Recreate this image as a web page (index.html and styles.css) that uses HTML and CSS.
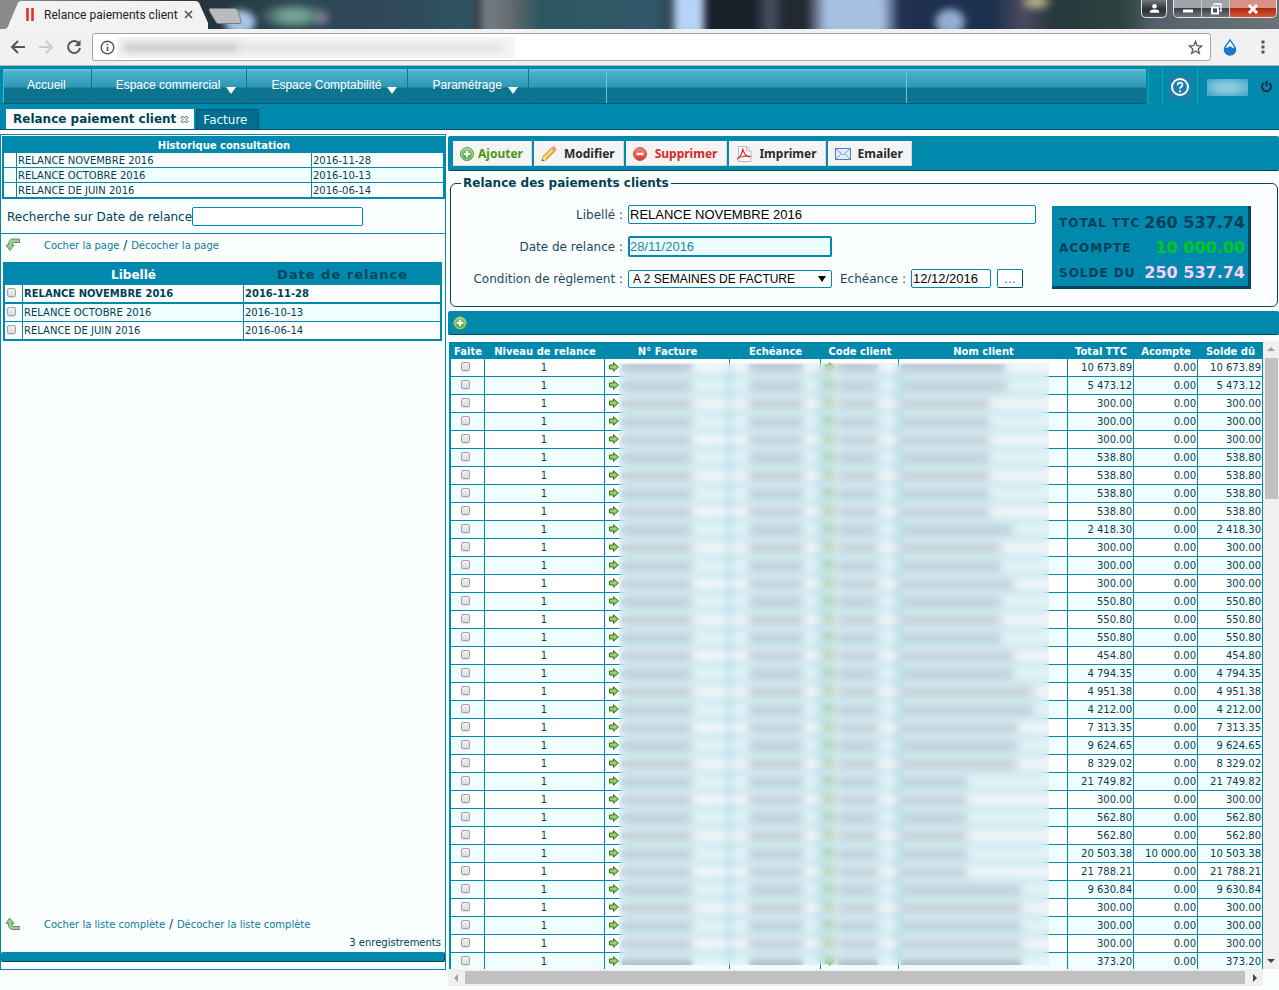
FILE: index.html
```html
<!DOCTYPE html>
<html lang="fr">
<head>
<meta charset="utf-8">
<title>Relance paiements client</title>
<link rel="stylesheet" href="styles.css">
</head>
<body>
<svg class="defs" width="0" height="0" aria-hidden="true">
  <defs>
    <linearGradient id="gGreen" x1="0" y1="0" x2="0" y2="1"><stop offset="0" stop-color="#8fd07f"/><stop offset="1" stop-color="#3f9a35"/></linearGradient>
    <linearGradient id="gRed" x1="0" y1="0" x2="0" y2="1"><stop offset="0" stop-color="#f08a80"/><stop offset="1" stop-color="#d8382c"/></linearGradient>
    <symbol id="plus" viewBox="0 0 14 14"><circle cx="7" cy="7" r="6.5" fill="url(#gGreen)" stroke="#5a9a50"/><circle cx="7" cy="7" r="5.4" fill="none" stroke="#c4e8bc" stroke-width=".8"/><path d="M7 3.8v6.4M3.8 7h6.4" stroke="#fff" stroke-width="2.2"/></symbol>
    <symbol id="arrow" viewBox="0 0 10 10"><path d="M.5 3h4V.7L9.400 5 4.500 9.300V7h-4z" fill="#86c25f" stroke="#3c7a16"/><path d="M2 5h5" stroke="#b4dc98" stroke-width="1"/></symbol>
  </defs>
</svg>

<header class="browser">
  <div class="titlebar">
    <div class="photo"></div>
    <div class="btab">
      <svg class="btab-shape" viewBox="0 0 208 29" preserveAspectRatio="none"><path d="M0 29h4c3 0 4-2 5-5l8-19c1-3 2-4 5-4h173c3 0 4 1 5 4l9 20c1 3 2 4 5 4z" fill="#f2f2f2"/></svg>
      <svg class="favicon" viewBox="0 0 8 16"><path d="M1.500 1v13M6.500 1v13" stroke="#e8302a" stroke-width="2.600"/></svg>
      <span class="btab-title">Relance paiements client</span>
      <svg class="btab-x" viewBox="0 0 9 9"><path d="M1 1l7 7M8 1l-7 7" stroke="#5a5a5a" stroke-width="1.700"/></svg>
    </div>
    <svg class="newtab" viewBox="0 0 34 16"><path d="M3 .5h23c2 0 3 1 4 3l3 9c1 2 0 3-2 3H11c-2 0-3-1-4-3L1.500 3C.8 1.500 1 .5 3 .5z" fill="#b8bcbf" stroke="#77808a"/></svg>
    <div class="winbtns">
      <button class="win user" aria-label="Profil"><svg viewBox="0 0 12 12" width="11" height="11"><circle cx="6" cy="3.500" r="2.500" fill="#fff"/><path d="M1 10.500V8.500C3 6.500 9 6.500 11 8.500v2z" fill="#fff"/></svg></button>
      <div class="wingroup">
        <button class="win" aria-label="Réduire"><svg viewBox="0 0 12 12" width="12" height="12"><path d="M1 6.500h10v3H1z" fill="#fff"/></svg></button>
        <button class="win" aria-label="Agrandir"><svg viewBox="0 0 12 12" width="12" height="12"><path d="M4 2.500V1h7v7H9.500" fill="none" stroke="#fff" stroke-width="1.300"/><path d="M2 4.500h6v6H2z" fill="none" stroke="#fff" stroke-width="2"/></svg></button>
        <button class="win close" aria-label="Fermer"><svg viewBox="0 0 12 12" width="12" height="12"><path d="M2 2l8 8M10 2l-8 8" stroke="#fff" stroke-width="3"/></svg></button>
      </div>
    </div>
  </div>
  <div class="navbar">
    <svg width="16" height="16" viewBox="0 0 16 16"><path d="M15 8H2M8 2L2 8l6 6" fill="none" stroke="#555" stroke-width="2"/></svg>
    <svg width="16" height="16" viewBox="0 0 16 16"><path d="M1 8h13M8 2l6 6-6 6" fill="none" stroke="#ccc" stroke-width="2"/></svg>
    <svg width="16" height="16" viewBox="0 0 16 16"><path d="M13 4.500A6 6 0 1 0 14 9" fill="none" stroke="#555" stroke-width="2"/><path d="M14.500 1v6h-6z" fill="#555"/></svg>
    <div class="address">
      <svg width="15" height="15" viewBox="0 0 15 15"><circle cx="7.500" cy="7.500" r="6.300" fill="none" stroke="#555" stroke-width="1.400"/><path d="M7.500 6.500V11M7.500 3.700v1.600" stroke="#555" stroke-width="1.600"/></svg>
      <span class="urlblur"><i></i><b></b></span>
      <svg class="star" width="15" height="15" viewBox="0 0 15 15"><path d="M7.500 1.500l1.700 4.200 4.500.3-3.500 2.900 1.100 4.400-3.800-2.400-3.800 2.400 1.100-4.400L1.300 6l4.500-.3z" fill="none" stroke="#555" stroke-width="1.300"/></svg>
    </div>
    <svg class="drop" width="14" height="17" viewBox="0 0 14 17"><path d="M7 1C5 4.500 1.500 7 1.500 10.500a5.500 5.500 0 0 0 11 0C12.500 7 9 4.500 7 1z" fill="#fff" stroke="#1877c9" stroke-width="1.500"/><path d="M1.500 9.500Q3 8 4.300 9 7 5.500 9.600 9 11 8 12.500 9.500v1a5.500 5.500 0 0 1-11 0z" fill="#1877c9"/></svg>
    <svg class="dots" width="4" height="14" viewBox="0 0 4 14"><path d="M.5.500h3v3h-3zM.5 5.500h3v3h-3zM.5 10.500h3v3h-3z" fill="#555"/></svg>
  </div>
</header>

<div class="appbar">
  <nav class="menurow">
    <div class="menu">
      <a class="item home" href="#">Accueil</a>
      <a class="item" href="#">Espace commercial<i class="caret"></i></a>
      <a class="item" href="#">Espace Comptabilité<i class="caret"></i></a>
      <a class="item" href="#">Paramétrage<i class="caret"></i></a>
      <span class="seg short"></span><span class="seg long"></span><span class="seg"></span>
    </div>
    <div class="tools">
      <span class="cell thin"></span>
      <button class="cell help" aria-label="Aide"><svg width="24" height="24" viewBox="0 0 24 24"><rect width="24" height="24" fill="#1a80aa"/><circle cx="12" cy="12" r="8" fill="none" stroke="#fff" stroke-width="2"/><path d="M9.500 10.200c0-3.400 5-3.400 5-.4 0 2-2.500 1.900-2.500 4M12 15.300v1.900" fill="none" stroke="#fff" stroke-width="1.700"/></svg></button>
      <span class="userblur"></span>
      <button class="power" aria-label="Déconnexion"><svg width="13" height="13" viewBox="0 0 13 13"><path d="M4 3a4.500 4.500 0 1 0 5 0M6.500 1v5.500" fill="none" stroke="#0b2f3c" stroke-width="1.900"/></svg></button>
    </div>
  </nav>
  <div class="tabs">
    <a class="tab active" href="#">Relance paiement client <svg width="9" height="9" viewBox="0 0 9 9"><path d="M2.500 1l2 2 2-2L8 2.500l-2 2 2 2L6.500 8l-2-2-2 2L1 6.500l2-2-2-2z" fill="#fff" stroke="#444" stroke-width=".9"/></svg></a>
    <a class="tab" href="#">Facture</a>
  </div>
</div>

<main class="content">
  <aside class="left">
    <table class="hist">
      <colgroup><col class="h1"><col><col class="h3"></colgroup>
      <thead><tr><th colspan="3">Historique consultation</th></tr></thead>
      <tbody>
        <tr><td></td><td>RELANCE NOVEMBRE 2016</td><td>2016-11-28</td></tr>
        <tr><td></td><td>RELANCE OCTOBRE 2016</td><td>2016-10-13</td></tr>
        <tr><td></td><td>RELANCE DE JUIN 2016</td><td>2016-06-14</td></tr>
      </tbody>
    </table>
    <div class="search"><label for="q">Recherche sur Date de relance</label><input id="q" type="text"></div>
    <div class="links">
      <svg width="16" height="14" viewBox="0 0 16 14"><path d="M14.500 1H8C5 1 3.500 3 3.500 7H1l4 5.500L9 7H7c0-2 .5-2.500 2-2.500h5.500z" fill="#9bcf8f" stroke="#4f8f48" stroke-width=".9"/></svg>
      <span><a href="#">Cocher la page</a> / <a href="#">Décocher la page</a></span>
    </div>
    <table class="list">
      <colgroup><col class="l1"><col><col class="l3"></colgroup>
      <thead><tr><th></th><th>Libellé</th><th class="sorted">Date de relance</th></tr></thead>
      <tbody>
        <tr class="current"><td><input type="checkbox" aria-label="RELANCE NOVEMBRE 2016"></td><td>RELANCE NOVEMBRE 2016</td><td>2016-11-28</td></tr>
        <tr><td><input type="checkbox" aria-label="RELANCE OCTOBRE 2016"></td><td>RELANCE OCTOBRE 2016</td><td>2016-10-13</td></tr>
        <tr><td><input type="checkbox" aria-label="RELANCE DE JUIN 2016"></td><td>RELANCE DE JUIN 2016</td><td>2016-06-14</td></tr>
      </tbody>
    </table>
    <div class="links bottom">
      <svg width="16" height="14" viewBox="0 0 16 14"><path d="M14.500 12.500H8C5 12.500 3.500 10.500 3.500 6.500H1L4.500 1 9 6.500H7c0 2.500.5 3 2 3h5.500z" fill="#9bcf8f" stroke="#4f8f48" stroke-width=".9"/></svg>
      <span><a href="#">Cocher la liste complète</a> / <a href="#">Décocher la liste complète</a></span>
    </div>
    <p class="count">3 enregistrements</p>
    <div class="footbar"></div>
  </aside>

  <section class="right">
    <div class="toolbar">
      <button class="act add"><svg width="14" height="14"><use href="#plus"/></svg>Ajouter</button>
      <button class="act edit"><svg width="16" height="16" viewBox="0 0 16 16"><path d="M1 15l1-4.500L11 1.500q1.500-1.300 3 0 1.500 1.500.3 3L5.500 13.500z" fill="#f6bf4c" stroke="#b57a1c" stroke-width=".9"/><path d="M3.500 11.500l8.500-8.500" stroke="#fde6a4" stroke-width="1.500"/><path d="M1 15l1-4.200 3.200 2.900z" fill="#f8dfb6"/><path d="M1 15l.5-2 1.500 1.400z" fill="#333"/><path d="M11 1.500q1.500-1.300 3 0 1.500 1.500.3 3l-1 1-3.300-3z" fill="#eaa27c"/></svg>Modifier</button>
      <button class="act del"><svg width="14" height="14" viewBox="0 0 14 14"><circle cx="7" cy="7" r="6.500" fill="url(#gRed)" stroke="#c8584e"/><path d="M3.500 7h7" stroke="#fff" stroke-width="2.400"/></svg>Supprimer</button>
      <button class="act print"><svg width="16" height="16" viewBox="0 0 16 16"><path d="M2.500.5h8l4.500 4.500v10.500H2.500z" fill="#fbfbfb" stroke="#b9b9b9"/><path d="M10.500.5V5H15" fill="none" stroke="#b9b9b9"/><path d="M1 13C4 12 7 6 6.500 2.500 8 8 11 11 14 10.500 11 9 4 10.500 1 13z" fill="none" stroke="#d42a22" stroke-width="1.100"/></svg>Imprimer</button>
      <button class="act mail"><svg width="16" height="12" viewBox="0 0 16 12"><rect x=".5" y=".5" width="15" height="11" fill="#e6f0fc" stroke="#4f7fc0"/><path d="M1 1l7 6 7-6M1 11l5-5M15 11l-5-5" fill="none" stroke="#6f9bd4"/></svg>Emailer</button>
    </div>
    <fieldset class="form">
      <legend>Relance des paiements clients</legend>
      <div class="fields">
        <label for="lib">Libellé :</label>
        <input id="lib" class="wide" type="text" value="RELANCE NOVEMBRE 2016">
        <label for="dt">Date de relance :</label>
        <input id="dt" class="date" type="text" value="28/11/2016" readonly>
        <label for="cond">Condition de règlement :</label>
        <div class="line">
          <span class="selwrap"><select id="cond"><option>A 2 SEMAINES DE FACTURE</option></select></span>
          <label for="ech">Echéance :</label>
          <input id="ech" type="text" value="12/12/2016">
          <button class="more">...</button>
        </div>
      </div>
      <dl class="totals">
        <dt>TOTAL TTC</dt><dd>260 537.74</dd>
        <dt>ACOMPTE</dt><dd class="green">10 000.00</dd>
        <dt>SOLDE DU</dt><dd class="pink">250 537.74</dd>
      </dl>
    </fieldset>
    <div class="addbar"><button aria-label="Ajouter une ligne"><svg width="14" height="14"><use href="#plus"/></svg></button></div>
    <div class="gridwrap">
      <div class="viewport">
        <table class="grid">
          <colgroup><col class="c1"><col class="c2"><col class="c3"><col class="c4"><col class="c5"><col><col class="c7"><col class="c8"><col class="c9"></colgroup>
          <thead><tr><th>Faite</th><th>Niveau de relance</th><th>N° Facture</th><th>Echéance</th><th>Code client</th><th>Nom client</th><th>Total TTC</th><th>Acompte</th><th>Solde dû</th></tr></thead>
          <tbody id="rows"></tbody>
        </table>
        <div class="veil"></div>
      </div>
      <div class="vbar"><i class="up"></i><span></span><i class="down"></i></div>
      <div class="hbar"><i class="prev"></i><span></span><i class="next"></i></div>
    </div>
  </section>
</main>
<script src="rows.js"></script>
</body>
</html>
```
FILE: rows.js
```js
// total | width of the masked client name; the balance equals the total unless a deposit is given
const data = [
  ["10 673.89", 104], ["5 473.12", 106], ["300.00", 88], ["300.00", 88], ["300.00", 88],
  ["538.80", 88], ["538.80", 88], ["538.80", 88], ["538.80", 88], ["2 418.30", 112],
  ["300.00", 100], ["300.00", 100], ["300.00", 112], ["550.80", 100], ["550.80", 100],
  ["550.80", 100], ["454.80", 112], ["4 794.35", 112], ["4 951.38", 132], ["4 212.00", 132],
  ["7 313.35", 116], ["9 624.65", 116], ["8 329.02", 116], ["21 749.82", 66], ["300.00", 66],
  ["562.80", 66], ["562.80", 66], ["20 503.38", 66, "10 000.00", "10 503.38"], ["21 788.21", 66],
  ["9 630.84", 120], ["300.00", 120], ["300.00", 120], ["300.00", 120], ["373.20", 120]
];
const arrow = '<svg class="go" width="10" height="10"><use href="#arrow"/></svg>';
document.getElementById("rows").innerHTML = data.map(([ttc, w, dep = "0.00", due = ttc], i) => `
<tr><td class="c check"><input type="checkbox" aria-label="Faite, ligne ${i + 1}"></td><td class="c">1</td>
<td><div class="masked">${arrow}<i class="m m-num"></i></div></td>
<td><div class="masked mid"><i class="m m-date"></i></div></td>
<td><div class="masked">${arrow}<i class="m m-code"></i></div></td>
<td><div class="masked"><i class="m" style="width:${w}px"></i></div></td>
<td>${ttc}</td><td>${dep}</td><td>${due}</td></tr>`).join("");
```
FILE: styles.css
```css
* { box-sizing: border-box; }
body {
  margin: 0;
  height: 100vh;
  display: flex;
  flex-direction: column;
  background: #fbffff;
  color: #003f55;
  font-family: "DejaVu Sans", sans-serif;
  font-size: 12px;
  overflow: hidden;
}
button, input, select { font: 13px "Liberation Sans", sans-serif; margin: 0; }
button { padding: 0; border: 0; background: none; }
svg { display: block; flex: none; }
.defs { position: absolute; }
a { text-decoration: none; color: inherit; }

/* browser frame */
.titlebar {
  position: relative;
  display: flex;
  align-items: flex-start;
  height: 29px;
  overflow: hidden;
  background: #2d4450;
}
.photo {
  position: absolute;
  inset: -6px;
  filter: blur(3px);
  background:
    radial-gradient(ellipse 18px 14px at 246px 28px, #a9c4e6 70%, transparent),
    radial-gradient(ellipse 36px 14px at 300px 22px, #76a596 30%, transparent),
    radial-gradient(ellipse 10px 10px at 328px 24px, #7c6a8c 30%, transparent),
    radial-gradient(ellipse 18px 10px at 1042px 8px, #b5b184 30%, transparent),
    radial-gradient(ellipse 18px 16px at 956px 28px, #93aed0 60%, transparent),
    linear-gradient(90deg, #8a8a8a 0 25px, #23343c 210px, #2b4652 300px, #30485a 400px, #2f5560 478px, #3a3640 482px, #72808a 492px, #686c6e 515px, #2d5660 545px, #33586a 660px, #2d4552 676px, #b6d4f6 684px 706px, #18202a 714px 760px, #465468 776px, #232932 790px 812px, #a8c0e0 832px 888px, #20304e 906px, #1c3050 1000px, #4a4a60 1028px, #26383c 1060px, #2c4440 1130px, #55606a 1160px, #6a7478 1290px);
}
.btab { position: relative; display: flex; align-items: center; width: 208px; height: 29px; padding: 0 15px 0 26px; }
.btab-shape { position: absolute; left: 0; top: 0; width: 100%; height: 100%; }
.favicon, .btab-title, .btab-x { position: relative; }
.favicon { width: 8px; height: 16px; margin-right: 10px; }
.btab-title { flex: 1; font: 12px Roboto, sans-serif; color: #222; white-space: nowrap; }
.btab-x { width: 9px; height: 9px; }
.newtab { position: relative; width: 34px; height: 16px; margin-top: 8px; }
.winbtns { position: relative; display: flex; gap: 6px; margin: 0 2px 0 auto; }
.wingroup { display: flex; border: 1px solid #e0e4e6; border-top: 0; border-radius: 0 0 5px 5px; overflow: hidden; }
.win { display: flex; align-items: center; justify-content: center; width: 28px; height: 17px; border-right: 1px solid #c8cccf; background: linear-gradient(#a0a4a8 0 45%, #3c4044 50%, #70767a); }
.win.user { width: 26px; height: 18px; border: 1px solid #e0e4e6; border-top: 0; border-radius: 0 0 5px 5px; background: linear-gradient(#70787a, #2a3234 55%, #4c5456); }
.win.close { width: 46px; border: 0; background: linear-gradient(#d99085 0 45%, #b02a14 50%, #d4573a); }
.navbar { display: flex; align-items: center; gap: 12px; height: 37px; padding: 0 14px 0 10px; background: #f1f1f2; border-bottom: 1px solid #b5b5b5; }
.address { flex: 1; display: flex; align-items: center; gap: 2px; height: 28px; padding: 0 7px; margin: 0 0 0 -2px; background: #fff; border: 1px solid #a6a6a6; border-radius: 3px; }
.urlblur { display: flex; align-items: center; width: 398px; height: 21px; padding-left: 6px; background: #f6f6f6; overflow: hidden; }
.urlblur i, .urlblur b { height: 7px; filter: blur(4px); }
.urlblur i { width: 116px; background: #b9b9b9; }
.urlblur b { width: 264px; background: #dcdcdc; }
.star { margin-left: auto; }
.drop { margin-right: 12px; }

/* application header */
.appbar { background: #0088ad; border-bottom: 1px solid #005670; }
.menurow { display: flex; height: 43px; padding: 3px 6px 0 3px; }
.menu { flex: 1; display: flex; height: 35px; border-bottom: 1px solid #045a70; background: linear-gradient(#6cc4da 0 1px, #4db3cf 2px, #2f97b3 18px, #0c748f 19px 100%); }
.item { display: flex; align-items: flex-start; gap: 6px; padding: 9px 10px 0 24px; border-right: 1px solid #0d7590; color: #fff; font: 12px "Liberation Sans", sans-serif; white-space: nowrap; }
.item.home { padding: 9px 25px 0 23px; border-left: 1px solid #4db3cf; }
.caret { margin-top: 9px; border: 5px solid transparent; border-top: 7px solid #fff; border-bottom: 0; }
.seg { flex: 1; }
.seg.short { flex: 0 0 78px; border-right: 1px solid #6cc4da; }
.seg.long { flex: 0 0 300px; border-right: 1px solid #6cc4da; }
.tools { display: flex; align-items: center; height: 37px; margin: -1px 0 0 2px; }
.cell { display: flex; align-items: center; justify-content: center; align-self: stretch; border-right: 1px solid #00b09a; }
.cell.thin { width: 15px; border-left: 1px solid #00b09a; }
.cell.help { width: 35px; }
.userblur { width: 41px; height: 17px; margin: 2px 12px 0 9px; background: radial-gradient(ellipse at center, #8cc8de 30%, #3fa3c2); }
.tabs { display: flex; gap: 2px; padding: 0 6px; align-items: flex-end; }
.tab { height: 20px; padding: 3px 11px 0 6px; border: 1px solid #005670; border-bottom: 0; background: #006e8c; color: #e8fbff; white-space: nowrap; line-height: 15px; }
.tab.active { display: flex; align-items: center; gap: 4px; padding: 0 4px 0 6px; background: #fbffff; color: #003f55; border-color: #fbffff; font-weight: bold; }

/* two panes */
.content { flex: 1; min-height: 0; display: grid; grid-template-columns: 446px minmax(0, 1fr); gap: 2px; padding: 4px 0; }
.left { display: flex; flex-direction: column; margin-bottom: 16px; padding: 1px 0 7px; border: 1px solid #0088ad; }
table { border-collapse: separate; border-spacing: 0; table-layout: fixed; font-size: 10px; }
th { background: #0088ad; color: #fff; padding: 0; }
.hist { width: calc(100% - 1px); margin-left: 1px; border: 2px solid #0088ad; border-right-width: 1px; border-bottom-width: 1px; }
.hist .h1 { width: 13px; }
.hist .h3 { width: 132px; }
.hist th { height: 15px; }
.hist td { height: 15px; padding: 1px 1px 0; border-right: 1px solid #0088ad; border-bottom: 1px solid #0088ad; line-height: 13px; background: #fff; }
tbody tr:nth-child(even) td { background: #f0feff; }
.search { display: flex; align-items: center; height: 35px; padding: 1px 0 0 6px; border-bottom: 1px solid #0088ad; }
input[type=text] { height: 19px; padding: 0 1px; border: 1px solid #0088ad; border-radius: 2px; background: #fff; color: #000; }
.search input { width: 171px; }
.links { display: flex; align-items: center; gap: 23px; height: 22px; padding-left: 4px; }
.links a { font-size: 10px; color: #0d7a9a; }
.list { margin: 6px 3px 0 2px; border: 2px solid #0088ad; border-right-width: 1px; border-bottom-width: 1px; }
.list .l1 { width: 18px; }
.list .l3 { width: 197px; }
.list th { height: 21px; font-size: 12px; }
.list th.sorted { font-size: 13px; color: #00485c; letter-spacing: 1px; }
.list td { height: 18px; padding: 0 1px; line-height: 14px; border-right: 1px solid #0088ad; border-bottom: 1px solid #0088ad; background: #fff; }
.list .current td { height: 19px; border-bottom-width: 2px; font-weight: bold; }
input[type=checkbox] { appearance: none; display: block; width: 9px; height: 9px; margin: 0 auto; border: 1px solid #a3a3a3; border-radius: 2px; background: linear-gradient(#f0f0f0, #dcdcdc); box-shadow: 0 1px 1px #ddd; }
.list input { margin: 0 0 2px 1px; }
.links.bottom { margin-top: auto; }
.count { margin: 0 4px 2px; padding-top: 1px; text-align: right; font-size: 10px; line-height: 14px; }
.footbar { height: 10px; background: #0088ad; border: solid #00485c; border-width: 0 1px 1px 0; border-radius: 2px; }

.right { display: flex; flex-direction: column; min-height: 0; padding-top: 2px; }
.toolbar, .addbar { background: #0088ad; border-bottom: 1px solid #00485c; }
.toolbar { display: flex; gap: 2px; height: 35px; padding: 5px; border-radius: 2px; }
.act { display: flex; align-items: center; height: 25px; padding: 0 8px 0 6px; background: #f4f4f4; border: 1px solid #f4f4f4; border-right-color: #d8d8d8; border-bottom-color: #d8d8d8; color: #2a2a2a; font: bold 12px "Noto Sans", sans-serif; }
.act svg { margin-right: 7px; }
.act.add { color: #4b9614; }
.add svg { margin-right: 4px; }
.act.del { color: #d62a22; padding-right: 9px; }
.del svg { margin-right: 8px; }
.form { display: flex; align-items: flex-start; min-width: 0; height: 131px; margin: 5px 1px 4px 2px; padding: 15px 26px 0 0; border: 1px solid #00485c; border-radius: 6px; }
.form legend { margin-left: 10px; padding: 0 2px; font-weight: bold; line-height: 14px; }
.fields { flex: 1; display: grid; grid-template-columns: 172px minmax(0, 1fr); column-gap: 5px; row-gap: 12px; align-items: center; color: #1c4a5c; }
.fields > label { text-align: right; white-space: nowrap; }
.fields .wide { width: 408px; }
.fields .date { width: 204px; height: 21px; border-width: 2px; background: #edfdff; color: #2a86a0; padding: 0; }
.line { display: flex; align-items: center; height: 19px; white-space: nowrap; }
.selwrap { position: relative; margin-right: 8px; }
.selwrap::after { content: ""; position: absolute; right: 6px; top: 6px; border: 4px solid transparent; border-top: 6px solid #000; border-bottom: 0; }
.selwrap select { appearance: none; display: block; width: 204px; height: 18px; padding: 0 4px; border: 1px solid #0088ad; border-radius: 2px; background: #fff; color: #000; font-size: 12px; }
.line input { width: 80px; margin: 0 6px 0 5px; }
.more { width: 26px; height: 19px; border: 1px solid #0088ad; border-color: #0088ad #00485c #00485c #0088ad; border-radius: 2px; background: #fff; color: #567; font: 12px "DejaVu Sans", sans-serif; line-height: 12px; }
.totals { display: grid; grid-template-columns: auto auto; grid-auto-rows: 25px; flex: 0 0 199px; height: 83px; margin: 1px 0 0; padding: 4px 3px 0 7px; align-items: center; background: #0088ad; border: 3px solid #00485c; border-width: 0 3px 3px 0; color: #004058; font-weight: bold; letter-spacing: 1px; white-space: nowrap; }
.totals dd { margin: 0; text-align: right; font-size: 16px; letter-spacing: 0; }
.totals .green { color: #00c820; }
.totals .pink { color: #fbd0ff; }
.addbar { display: flex; align-items: center; height: 24px; padding-left: 5px; margin-bottom: 6px; border-radius: 2px; }

.gridwrap { flex: 1; min-height: 0; display: grid; grid-template: minmax(0, 1fr) 17px / minmax(0, 1fr) 16px; }
.viewport { position: relative; overflow: hidden; padding: 1px 0 0 1px; }
.grid { width: 100%; border-left: 2px solid #0088ad; }
.c1 { width: 34px; } .c2 { width: 120px; } .c3 { width: 125px; } .c4 { width: 91px; } .c5 { width: 78px; }
.c7 { width: 66px; } .c8 { width: 64px; } .c9 { width: 65px; }
.grid th { height: 17px; padding-top: 2px; line-height: 15px; white-space: nowrap; }
.grid td { height: 18px; padding: 0 1px 0 0; border-right: 1px solid #0088ad; border-bottom: 1px solid #0088ad; background: #fff; text-align: right; line-height: 14px; white-space: nowrap; }
.grid td.c { text-align: center; }
.grid td.check { padding: 0 4px 2px 0; }
.masked { display: flex; align-items: center; height: 14px; padding-left: 2px; }
.masked.mid { justify-content: center; }
.go { margin: 0 3px 2px 2px; }
.m { height: 6px; background: #a9b3be; }
.m-num { width: 70px; }
.m-date { width: 54px; }
.m-code { width: 40px; }
/* hides the customer data of the four middle columns */
.veil { position: absolute; left: 171px; right: 214px; top: 22px; bottom: 4px; backdrop-filter: blur(4px); background: rgba(180, 215, 228, .22); }
.vbar, .hbar { display: flex; align-items: center; background: #f0f0f0; }
.vbar { flex-direction: column; padding: 6px 0; }
.vbar span { width: 13px; height: 141px; margin: 7px 0 auto 1px; background: #c1c1c1; }
.hbar { padding: 0 6px; }
.hbar span { flex: 1; height: 13px; margin: 0 8px 0 7px; background: #c1c1c1; }
.up, .down, .prev, .next { border: 4px solid transparent; }
.up { border-top: 0; border-bottom-color: #a3a3a3; }
.down { border-bottom: 0; border-top-color: #444; }
.prev { border-left: 0; border-right-color: #a3a3a3; }
.next { border-right: 0; border-left-color: #444; }
```
